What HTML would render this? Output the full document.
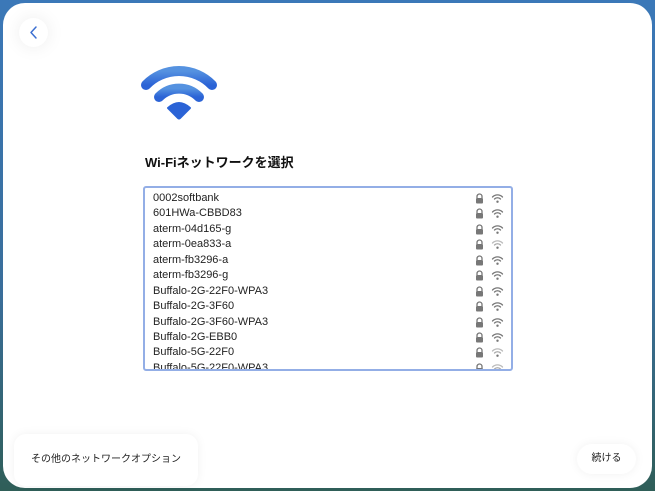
<!DOCTYPE html>
<html><head><meta charset="utf-8"><style>
html,body{margin:0;padding:0;width:655px;height:491px;overflow:hidden;font-family:"Liberation Sans","Noto Sans CJK JP",sans-serif;}
body{background:linear-gradient(180deg,#3b78b8 0%,#3a6e9a 60%,#2f5e58 100%);position:relative;}
.panel{position:absolute;left:3px;top:3px;width:649px;height:485px;background:#fff;border-radius:22px;}
.back{position:absolute;left:19px;top:18px;width:29px;height:29px;border-radius:50%;background:#fff;box-shadow:0 0 18px rgba(0,0,0,0.08);}
.title{position:absolute;left:145px;top:152px;font-size:13px;font-weight:bold;color:#111;}
.list{position:absolute;left:143px;top:186px;width:366px;height:181px;border:2px solid #93aee6;border-radius:3px;overflow:hidden;}
.inner{padding-top:3px;}
.row{position:relative;height:15.45px;font-size:11px;line-height:15.4px;color:#222;padding-left:8px;}
.row svg{position:absolute;top:2px;}
.btn{position:absolute;background:#fff;border-radius:16px;font-size:10px;color:#222;box-shadow:0 0 10px rgba(0,0,0,0.06);}
</style></head><body>
<div class="panel"></div>
<div class="back"><svg width="29" height="29"><path d="M17 9 L12 14.5 L17 20" fill="none" stroke="#3c6fd1" stroke-width="1.5" stroke-linecap="round" stroke-linejoin="round"/></svg></div>
<svg style="position:absolute;left:141px;top:64px" width="76" height="58" viewBox="0 0 76 58">
<defs><linearGradient id="g" x1="0" y1="0" x2="0" y2="1"><stop offset="0" stop-color="#5592e0"/><stop offset="1" stop-color="#2b63d6"/></linearGradient></defs>
<path d="M5 21 A46 46 0 0 1 71 21" fill="none" stroke="url(#g)" stroke-width="10" stroke-linecap="round"/>
<path d="M18 33 A28 28 0 0 1 58 33" fill="none" stroke="url(#g)" stroke-width="10" stroke-linecap="round"/>
<path d="M27 44 Q38 34 49 44 L39 54 Q38 55 37 54 Z" fill="#2b63d6" stroke="#2b63d6" stroke-width="2" stroke-linejoin="round"/>
</svg>
<div class="title">Wi-Fiネットワークを選択</div>
<div class="list"><div class="inner" id="l"></div></div>
<div class="btn" style="left:14px;top:434px;width:184px;height:52px;border-radius:12px;line-height:52px;text-align:center;">その他のネットワークオプション</div>
<div class="btn" style="left:577px;top:444px;width:59px;height:30px;line-height:30px;text-align:center;">続ける</div>
<script>
var n=["0002softbank","601HWa-CBBD83","aterm-04d165-g","aterm-0ea833-a","aterm-fb3296-a","aterm-fb3296-g","Buffalo-2G-22F0-WPA3","Buffalo-2G-3F60","Buffalo-2G-3F60-WPA3","Buffalo-2G-EBB0","Buffalo-5G-22F0","Buffalo-5G-22F0-WPA3"];
var weak=[3,10,11];
var h="";
n.forEach(function(s,i){
var w=weak.indexOf(i)>=0;
h+='<div class="row">'+s+
'<svg style="left:330px" width="9" height="11"><path d="M2 5 V3.5 A2.5 2.5 0 0 1 7 3.5 V5" fill="none" stroke="#777" stroke-width="1.3"/><rect x="1" y="5" width="7" height="5.5" rx="1" fill="#777"/></svg>'+
'<svg style="left:346px" width="13" height="11"><path d="M1.5 4 A7 7 0 0 1 11.5 4" fill="none" stroke="'+(w?'#bbb':'#777')+'" stroke-width="1.3" stroke-linecap="round"/><path d="M3.5 6 A4.3 4.3 0 0 1 9.5 6" fill="none" stroke="'+(w?'#aaa':'#777')+'" stroke-width="1.3" stroke-linecap="round"/><circle cx="6.5" cy="8.7" r="1.2" fill="#777"/></svg></div>';
});
document.getElementById("l").innerHTML=h;
</script>
</body></html>
